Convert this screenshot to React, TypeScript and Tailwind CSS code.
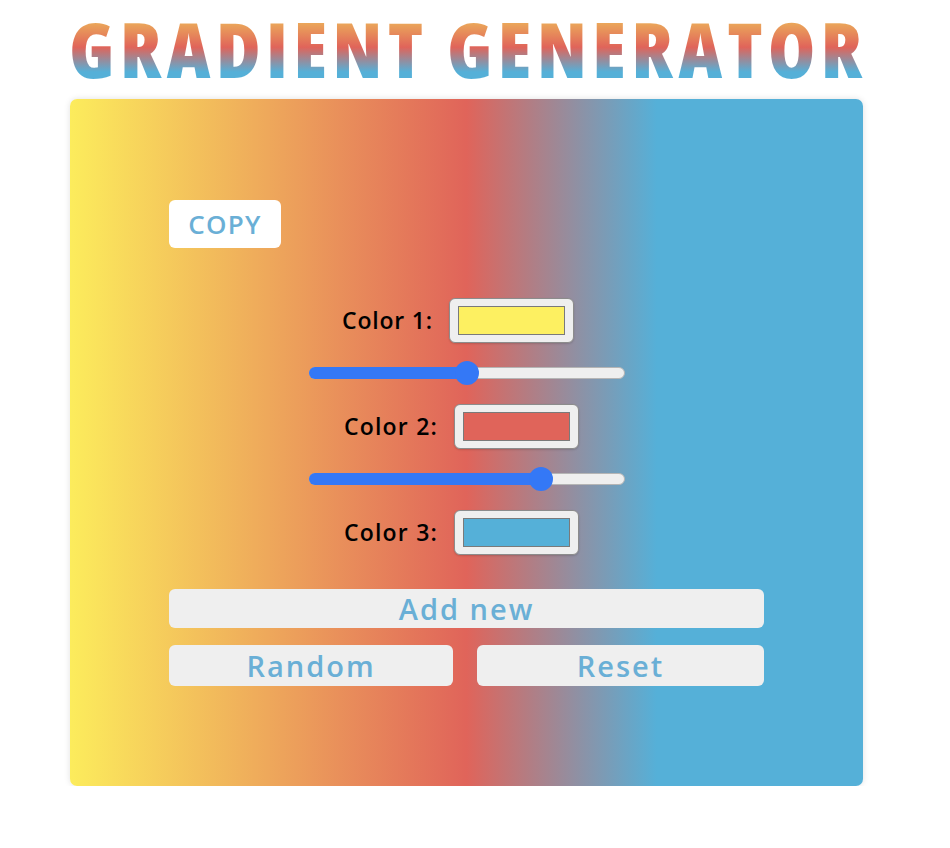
import React from "react";

const Swatch = ({ color }: { color: string }) => (
  <div className="w-[125px] h-[45px] rounded-[6px] border-[1.5px] border-[#8c8c8c] bg-[#efefef] px-[8px] py-[7px] shadow-[0_1px_2px_rgba(0,0,0,0.15)]">
    <div className="w-full h-full border-[1.5px] border-[#7a7a7a]" style={{ backgroundColor: color }} />
  </div>
);

const Slider = ({ pct }: { pct: number }) => (
  <div className="relative w-[316px] h-[24px] flex items-center">
    <div className="w-full h-[12px] rounded-full bg-[#efefef] border border-[#b5b5b5]" />
    <div className="absolute left-0 h-[12px] rounded-full bg-[#3478f6]" style={{ width: `${pct}%` }} />
    <div
      className="absolute w-[24px] h-[24px] rounded-full bg-[#3478f6] -translate-x-1/2"
      style={{ left: `${pct}%` }}
    />
  </div>
);

export default function App() {
  const font = { fontFamily: '"Open Sans", "Liberation Sans", sans-serif' };
  return (
    <div className="w-[933px] flex flex-col items-center bg-white" style={font}>
      <h1
        className="mt-[5px] pl-[6px] pr-[2px] text-[76px] leading-[88px] tracking-[5.5px] font-extrabold bg-clip-text text-transparent bg-[linear-gradient(to_bottom,#eba85a_20%,#e0645a_48%,#55b0d8_76%)]"
        style={{ fontStretch: "75%" }}
      >
        GRADIENT GENERATOR
      </h1>
      <div className="mt-[6px] w-[793px] h-[687px] rounded-[7px] shadow-[0_0_6px_rgba(0,0,0,0.12)] bg-[linear-gradient(to_right,#fcec5c_0%,#e0645a_50%,#55b0d8_74%)] px-[99px] pt-[101px]">
        <button className="w-[112px] h-[48px] rounded-[6px] bg-white text-[#6aafd6] text-[26px] tracking-[1.3px] font-semibold">
          COPY
        </button>
        <div className="mt-[50px] flex flex-col items-center">
          <div className="flex items-center gap-[16px] pr-[17px]">
            <span className="text-[23px] tracking-[0.8px] font-semibold text-black">Color 1:</span>
            <Swatch color="#fdf061" />
          </div>
          <div className="mt-[18px]">
            <Slider pct={50} />
          </div>
          <div className="mt-[19px] flex items-center gap-[16px] pr-[10px]">
            <span className="text-[23px] tracking-[1.2px] font-semibold text-black">Color 2:</span>
            <Swatch color="#e0645a" />
          </div>
          <div className="mt-[18px]">
            <Slider pct={73.7} />
          </div>
          <div className="mt-[19px] flex items-center gap-[16px] pr-[10px]">
            <span className="text-[23px] tracking-[1.2px] font-semibold text-black">Color 3:</span>
            <Swatch color="#55b0d8" />
          </div>
        </div>
        <button className="mt-[34px] w-full h-[39px] rounded-[6px] bg-[#efefef] text-[#6aafd6] text-[29px] tracking-[2px] font-semibold leading-none">
          Add new
        </button>
        <div className="mt-[17px] flex gap-[24px]">
          <button className="w-[284px] h-[41px] rounded-[6px] bg-[#efefef] text-[#6aafd6] text-[29px] tracking-[2px] font-semibold leading-none">
            Random
          </button>
          <button className="flex-1 h-[41px] rounded-[6px] bg-[#efefef] text-[#6aafd6] text-[29px] tracking-[2px] font-semibold leading-none">
            Reset
          </button>
        </div>
      </div>
    </div>
  );
}
